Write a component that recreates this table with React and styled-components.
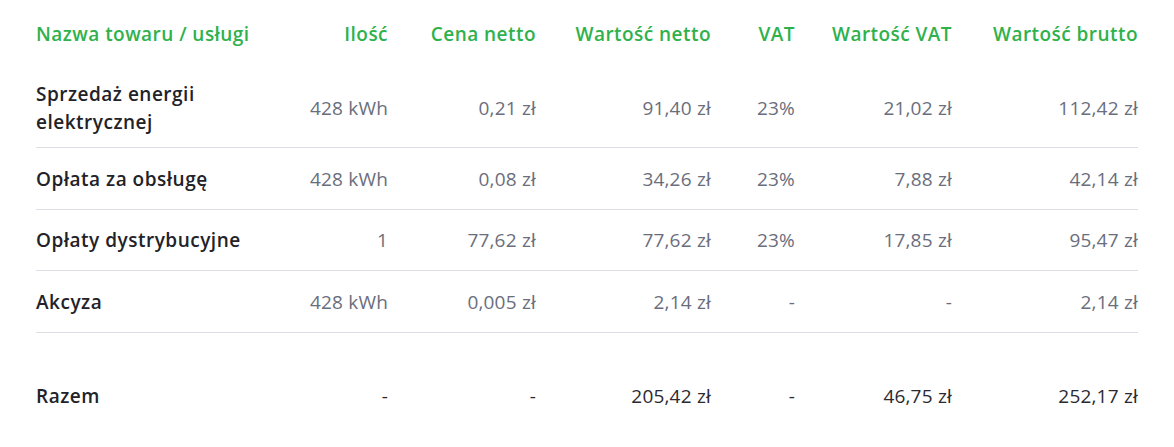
import React from "react";
import styled, { createGlobalStyle } from "styled-components";

const Global = createGlobalStyle`
  html, body { margin: 0; padding: 0; background: #ffffff; }
  body { font-family: "Open Sans", "Noto Sans", sans-serif; }
`;

const Wrap = styled.div`
  padding: 0 36px;
  width: 1102px;
`;

const cols = "232px 120px 148px 175px 84px 157px 186px";

const Row = styled.div`
  display: grid;
  grid-template-columns: ${cols};
  align-items: center;
  min-height: ${(p) => p.$h}px;
  border-bottom: ${(p) => (p.$line ? "1px solid #dcdee3" : "none")};
  margin-top: ${(p) => p.$mt || 0}px;
  box-sizing: border-box;
`;

const Head = styled.div`
  font-family: "Open Sans", sans-serif;
  font-weight: 600;
  font-size: 19px;
  letter-spacing: 0.45px;
  color: #2fb14b;
  text-align: ${(p) => (p.$left ? "left" : "right")};
  line-height: 28px;
  white-space: nowrap;
`;

const Name = styled.div`
  font-family: "Open Sans", sans-serif;
  font-weight: 600;
  font-size: 19px;
  letter-spacing: 0.5px;
  color: #222228;
  line-height: 28px;
  padding-right: 8px;
`;

const Num = styled.div`
  font-family: "Open Sans", sans-serif;
  font-weight: 400;
  font-size: 19px;
  letter-spacing: 0.2px;
  color: ${(p) => (p.$dark ? "#2a2a30" : "#6a6e7c")};
  text-align: right;
  line-height: 28px;
`;

const headers = [
  "Ilość",
  "Cena netto",
  "Wartość netto",
  "VAT",
  "Wartość VAT",
  "Wartość brutto",
];

const rows = [
  ["Sprzedaż energii elektrycznej", "428 kWh", "0,21 zł", "91,40 zł", "23%", "21,02 zł", "112,42 zł", 80],
  ["Opłata za obsługę", "428 kWh", "0,08 zł", "34,26 zł", "23%", "7,88 zł", "42,14 zł", 62],
  ["Opłaty dystrybucyjne", "1", "77,62 zł", "77,62 zł", "23%", "17,85 zł", "95,47 zł", 61],
  ["Akcyza", "428 kWh", "0,005 zł", "2,14 zł", "-", "-", "2,14 zł", 62],
];

const total = ["Razem", "-", "-", "205,42 zł", "-", "46,75 zł", "252,17 zł"];

export default function App() {
  return (
    <>
      <Global />
      <Wrap>
        <Row $h={68}>
          <Head $left>Nazwa towaru / usługi</Head>
          {headers.map((h) => (
            <Head key={h}>{h}</Head>
          ))}
        </Row>
        {rows.map((r) => (
          <Row key={r[0]} $h={r[7]} $line>
            <Name>{r[0]}</Name>
            {r.slice(1, 7).map((v, i) => (
              <Num key={i}>{v}</Num>
            ))}
          </Row>
        ))}
        <Row $h={62} $mt={32}>
          <Name>{total[0]}</Name>
          {total.slice(1).map((v, i) => (
            <Num key={i} $dark>{v}</Num>
          ))}
        </Row>
      </Wrap>
    </>
  );
}
